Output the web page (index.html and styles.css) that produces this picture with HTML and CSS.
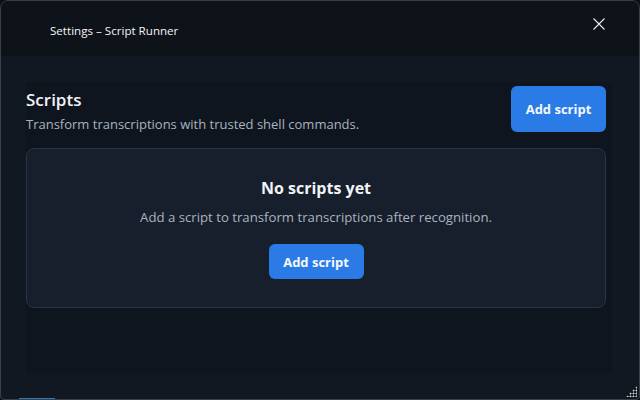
FILE: index.html
```html
<!DOCTYPE html>
<html>
<head>
<meta charset="utf-8">
<link rel="stylesheet" href="styles.css">
</head>
<body>
<div class="window">
  <div class="titlebar">
    <span class="title">Settings – Script Runner</span>
    <svg class="close" width="12" height="12" viewBox="0 0 12 12"><path d="M0.5 0.5 L11.5 11.5 M11.5 0.5 L0.5 11.5" stroke="#e8eaed" stroke-width="1.1" fill="none"/></svg>
  </div>
  <div class="body">
    <div class="panel">
      <div class="header">
        <div class="heading">
          <h2 class="h-title">Scripts</h2>
          <p class="h-sub">Transform transcriptions with trusted shell commands.</p>
        </div>
        <button class="btn btn-lg">Add script</button>
      </div>
      <div class="card">
        <h3 class="empty-title">No scripts yet</h3>
        <p class="empty-text">Add a script to transform transcriptions after recognition.</p>
        <button class="btn btn-sm">Add script</button>
      </div>
    </div>
  </div>
  <div class="grip"></div>
  <div class="taskline"></div>
</div>
</body>
</html>
```
FILE: styles.css
```css
* { box-sizing: border-box; }
html, body { margin: 0; padding: 0; background: #0b0e13; }
body {
  width: 640px; height: 400px; overflow: hidden;
  font-family: "Segoe UI", "Open Sans", "Noto Sans", sans-serif;
}
.window {
  position: relative;
  width: 640px; height: 400px;
  border: 1px solid #3a3e45;
  border-radius: 8px 8px 4px 4px;
  background: #121821;
  display: flex; flex-direction: column;
  overflow: hidden;
}
.titlebar {
  height: 55px; flex: none;
  background: #0e1219;
  display: flex; align-items: center; justify-content: space-between;
  padding: 0 34px 0 49px;
}
.title { color: #f2f4f7; font-size: 11.6px; margin-top: 4px; }
.close { margin-top: -10px; }
.body {
  flex: 1;
  padding: 26px 27px 26px 25px;
  display: flex;
}
.panel {
  flex: 1;
  background: #0f151e;
  padding: 4px 6px 0 0;
  display: flex; flex-direction: column;
}
.header {
  display: flex; justify-content: space-between; align-items: flex-start;
}
.heading { padding-top: 3px; }
.h-title { margin: 0; color: #f1f3f6; font-size: 17px; font-weight: 600; line-height: 22px; }
.h-sub { margin: 4px 0 0; color: #a9b3bf; font-size: 13px; line-height: 18px; }
.btn {
  border: none; background: #2b7be6; color: #f5f8fc;
  font-family: inherit; font-weight: 700; font-size: 13px;
  border-radius: 6px;
}
.btn-lg { width: 95px; height: 46px; }
.btn-sm { width: 95px; height: 35px; font-size: 13px; }
.card {
  margin-top: 15px;
  height: 160px;
  background: #161f2b;
  border: 1px solid #283444;
  border-radius: 8px;
  display: flex; flex-direction: column; align-items: center;
  padding-top: 28px;
}
.empty-title { margin: 0; color: #f1f3f6; font-size: 16px; font-weight: 700; line-height: 22px; }
.empty-text { margin: 9px 0 18px; color: #a9b3bf; font-size: 13.2px; line-height: 18px; }
.grip {
  position: absolute; right: 2px; bottom: 2px;
  width: 11px; height: 11px;
  background:
    radial-gradient(circle, #cfd3d8 0.9px, transparent 1.1px) 0 0 / 3px 3px;
  clip-path: polygon(100% 0, 100% 100%, 0 100%);
}
.taskline {
  position: absolute; left: 18px; bottom: -1px; width: 36px; height: 2px; background: #2d78b8;
}
```
